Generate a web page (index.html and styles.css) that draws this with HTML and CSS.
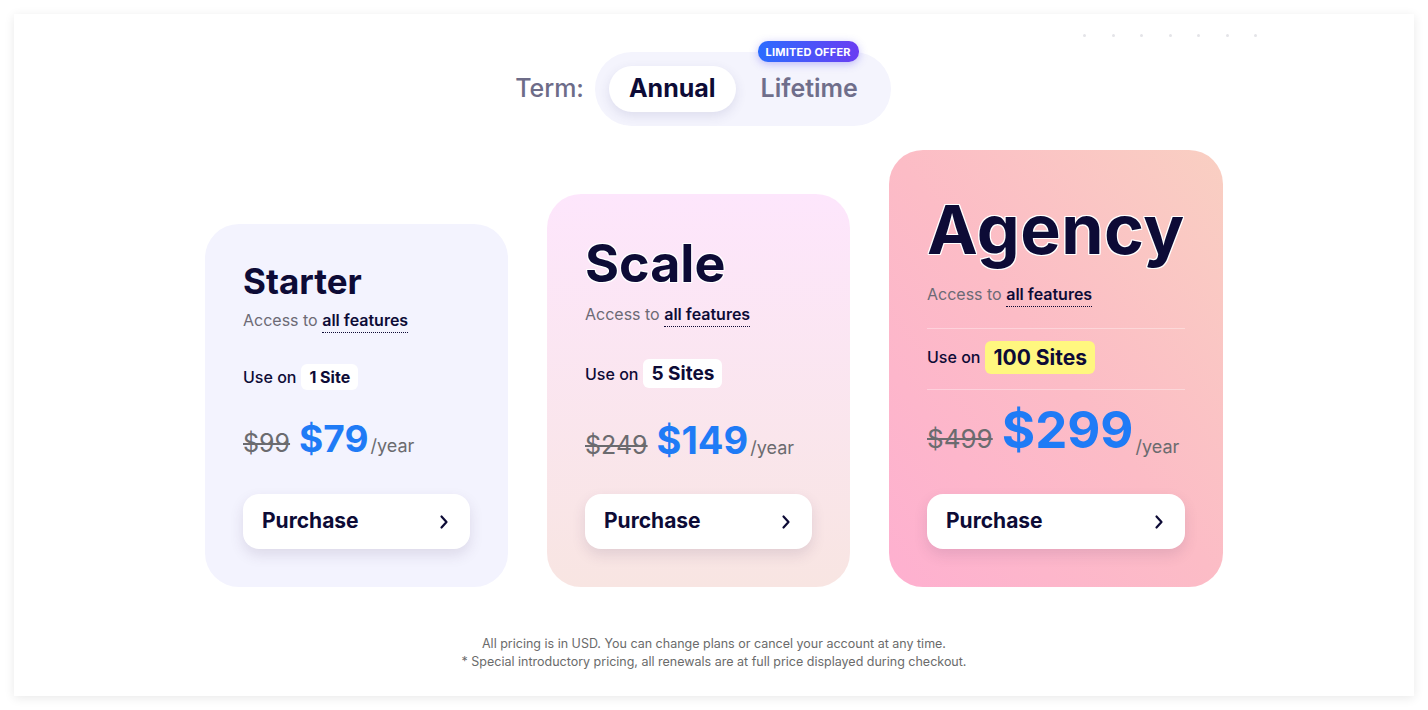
FILE: index.html
```html
<!DOCTYPE html>
<html lang="en">
<head>
<meta charset="utf-8">
<title>Pricing</title>
<link rel="stylesheet" href="styles.css">
</head>
<body>
<div class="frame">
  <div class="dots"><span></span><span></span><span></span><span></span><span></span><span></span><span></span></div>

  <div class="term-row">
    <span class="term-label">Term:</span>
    <div class="toggle">
      <span class="opt active">Annual</span>
      <span class="opt">Lifetime<span class="badge">LIMITED OFFER</span></span>
    </div>
  </div>

  <div class="cards">
    <div class="card starter">
      <h2 class="title">Starter</h2>
      <p class="access">Access to <span class="feat">all features</span></p>
      <p class="use">Use on <span class="sites">1 Site</span></p>
      <p class="price"><s class="old">$99</s><span class="new">$79</span><span class="per">/year</span></p>
      <a class="buy" href="#"><span>Purchase</span><svg width="10" height="16" viewBox="0 0 10 16"><path d="M2.5 2.5 L7.5 8 L2.5 13.5" fill="none" stroke="#0d0b36" stroke-width="2.2" stroke-linecap="round" stroke-linejoin="round"/></svg></a>
    </div>

    <div class="card scale">
      <h2 class="title">Scale</h2>
      <p class="access">Access to <span class="feat">all features</span></p>
      <p class="use">Use on <span class="sites">5 Sites</span></p>
      <p class="price"><s class="old">$249</s><span class="new">$149</span><span class="per">/year</span></p>
      <a class="buy" href="#"><span>Purchase</span><svg width="10" height="16" viewBox="0 0 10 16"><path d="M2.5 2.5 L7.5 8 L2.5 13.5" fill="none" stroke="#0d0b36" stroke-width="2.2" stroke-linecap="round" stroke-linejoin="round"/></svg></a>
    </div>

    <div class="card agency">
      <h2 class="title">Agency</h2>
      <p class="access">Access to <span class="feat">all features</span></p>
      <p class="use">Use on <span class="sites">100 Sites</span></p>
      <p class="price"><s class="old">$499</s><span class="new">$299</span><span class="per">/year</span></p>
      <a class="buy" href="#"><span>Purchase</span><svg width="10" height="16" viewBox="0 0 10 16"><path d="M2.5 2.5 L7.5 8 L2.5 13.5" fill="none" stroke="#0d0b36" stroke-width="2.2" stroke-linecap="round" stroke-linejoin="round"/></svg></a>
    </div>
  </div>

  <div class="footnote">
    <p>All pricing is in USD. You can change plans or cancel your account at any time.</p>
    <p>* Special introductory pricing, all renewals are at full price displayed during checkout.</p>
  </div>
</div>
</body>
</html>
```

FILE: styles.css
```css
* { box-sizing: border-box; }
html, body { margin: 0; padding: 0; background: #ffffff; }
body {
  font-family: Inter, "Noto Sans", "Liberation Sans", sans-serif;
  color: #0d0b36;
  padding: 14px;
}
p, h2 { margin: 0; }

.frame {
  position: relative;
  height: 682px;
  background: #ffffff;
  box-shadow: 0 2px 10px rgba(0, 0, 0, 0.09);
  padding-top: 38px;
}

.dots {
  position: absolute;
  top: 20px;
  left: 1069px;
  display: flex;
  gap: 25.5px;
}
.dots span {
  width: 3px;
  height: 3px;
  border-radius: 50%;
  background: #e4e4e8;
}

.term-row {
  display: flex;
  align-items: center;
  justify-content: center;
  gap: 11px;
  padding-right: 22px;
}
.term-label {
  font-size: 25px;
  font-weight: 500;
  color: #6d6c88;
  padding-bottom: 3px;
}
.toggle {
  display: flex;
  align-items: center;
  gap: 5px;
  height: 74px;
  padding: 0 13px 0 14px;
  background: #f4f4fd;
  border-radius: 37px;
}
.opt {
  position: relative;
  display: flex;
  align-items: center;
  height: 46px;
  padding: 0 20px 3px;
  border-radius: 23px;
  font-size: 25px;
  font-weight: 600;
  color: #6f6e8b;
}
.opt.active {
  background: #ffffff;
  color: #0d0b36;
  font-weight: 700;
  box-shadow: 0 4px 12px rgba(60, 60, 120, 0.12);
}
.badge {
  position: absolute;
  top: -25px;
  left: 17px;
  height: 21px;
  padding: 0 8px;
  display: flex;
  align-items: center;
  border-radius: 10px;
  background: linear-gradient(90deg, #2b6cff, #6a3df2);
  color: #fff;
  font-size: 11px;
  font-weight: 700;
  letter-spacing: 0.2px;
  white-space: nowrap;
  box-shadow: 0 2px 8px rgba(80, 70, 240, 0.35);
}

.cards {
  display: flex;
  justify-content: center;
  align-items: flex-end;
  gap: 39px;
  margin-top: 24px;
}
.card {
  display: flex;
  flex-direction: column;
  align-items: flex-start;
  border-radius: 34px;
  padding: 0 38px 38px 38px;
}
.starter {
  width: 303px;
  height: 363px;
  background: #f3f3fe;
  padding-top: 36px;
}
.scale {
  width: 303px;
  height: 393px;
  background: linear-gradient(180deg, #fde6fc 0%, #f8e5e2 100%);
  padding-top: 39px;
}
.agency {
  width: 334px;
  height: 437px;
  background: linear-gradient(to bottom left, #f9cfc2 0%, #fcbcc6 50%, #feb0d0 100%);
  padding-top: 39px;
}

.title {
  font-weight: 700;
  color: #0d0b36;
  line-height: 1.2;
  text-shadow: 1px 0 0 #fff, -1px 0 0 #fff, 0 1px 0 #fff, 0 -1px 0 #fff,
    1px 1px 0 #fff, -1px -1px 0 #fff, 1px -1px 0 #fff, -1px 1px 0 #fff;
}
.starter .title { font-size: 35px; text-shadow: none; }
.scale .title { font-size: 52px; }
.agency .title { font-size: 68px; letter-spacing: 0.5px; }

.access {
  font-size: 16px;
  color: #6c6a75;
  margin-top: 8px;
}
.scale .access { margin-top: 9px; }
.feat {
  color: #0d0b36;
  font-weight: 600;
  border-bottom: 1.5px dotted #0d0b36;
  padding-bottom: 2px;
}

.use {
  display: flex;
  align-items: center;
  gap: 5px;
  font-size: 16px;
  font-weight: 500;
  color: #0d0b36;
  margin-top: 34px;
}
.scale .use { margin-top: 35px; }
.sites {
  background: #ffffff;
  border-radius: 6px;
  font-weight: 700;
  padding: 3px 8px;
}
.starter .sites { font-size: 16px; }
.scale .sites { font-size: 19px; padding: 3px 8px; }
.agency .sites { font-size: 21px; padding: 4px 8px; background: #fff77f; }

.agency .access { margin-top: 13px; padding-bottom: 24px; border-bottom: 1px solid rgba(255,255,255,0.35); width: 100%; }
.agency .use { margin-top: 12px; padding-bottom: 15px; border-bottom: 1px solid rgba(255,255,255,0.35); width: 100%; }

.price {
  display: flex;
  align-items: baseline;
  margin-top: 26px;
  white-space: nowrap;
}
.scale .price { margin-top: 29px; }
.old {
  color: #6b6b6f;
  font-size: 25px;
  font-weight: 400;
  margin-right: 9px;
}
.new {
  color: #1f7bf6;
  font-weight: 700;
}
.starter .new { font-size: 37px; }
.scale .new { font-size: 38px; }
.agency .new { font-size: 51px; }
.agency .old { font-size: 26px; }
.agency .price { margin-top: 9px; }
.per {
  color: #6b6b6f;
  font-size: 18px;
  margin-left: 2px;
}
.agency .per { position: relative; top: 5px; }

.buy {
  margin-top: auto;
  align-self: stretch;
  height: 55px;
  display: flex;
  align-items: center;
  justify-content: space-between;
  padding: 0 21px 3px 19px;
  background: #ffffff;
  border-radius: 16px;
  box-shadow: 0 6px 14px rgba(70, 50, 90, 0.13);
  text-decoration: none;
  color: #0d0b36;
  font-size: 21px;
  font-weight: 700;
}
.buy svg { display: block; margin-top: 3px; }

.footnote {
  margin-top: 48px;
  text-align: center;
  font-size: 12.5px;
  line-height: 18px;
  color: #6b6b6b;
}
```
